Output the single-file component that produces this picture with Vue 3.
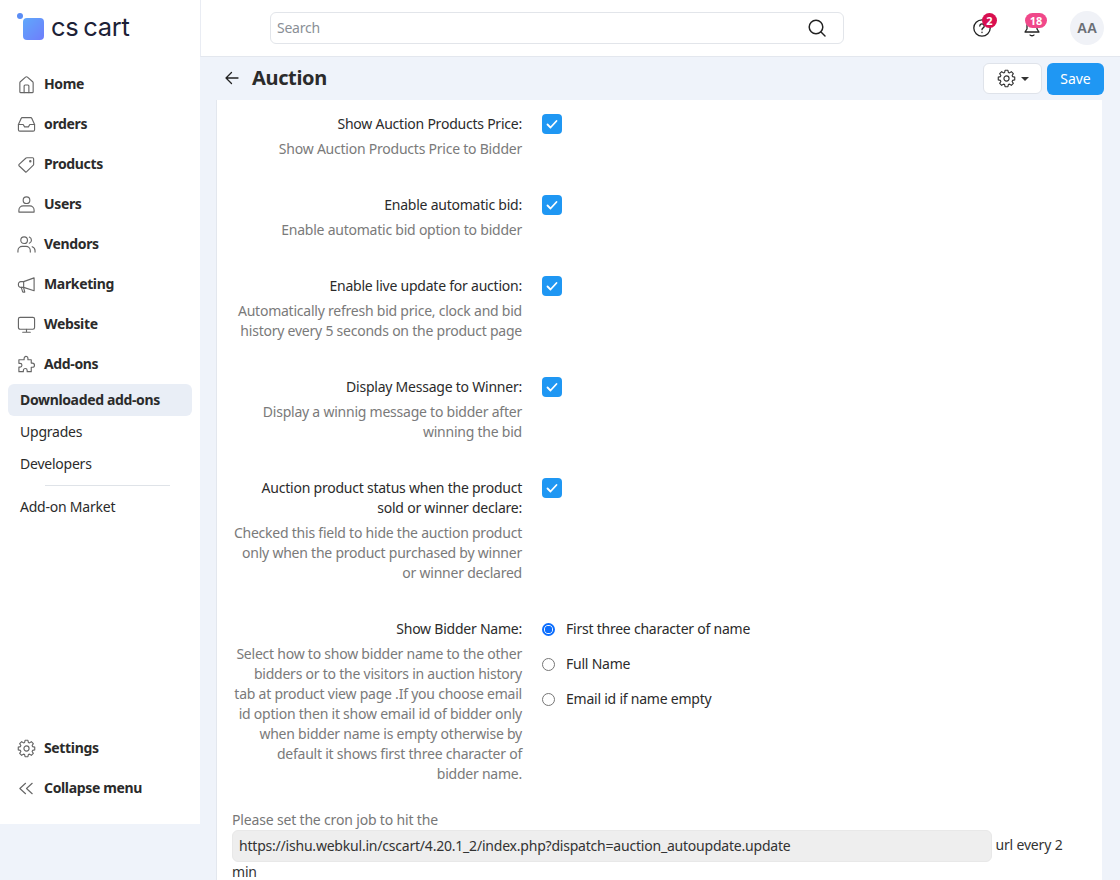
<template>
  <div class="app">
    <aside class="sidebar">
      <div class="logo">
        <span class="logo-mark"><i class="logo-dot"></i><i class="logo-box"></i></span>
        <span class="logo-text">cs cart</span>
      </div>

      <nav class="nav">
        <a v-for="item in menu" :key="item.label" class="nav-item">
          <svg class="nav-icon" viewBox="0 0 20 20" v-html="item.icon"></svg>
          {{ item.label }}
        </a>
      </nav>

      <div class="subnav">
        <a class="sub-item active">Downloaded add-ons</a>
        <a class="sub-item">Upgrades</a>
        <a class="sub-item">Developers</a>
        <div class="sub-divider"></div>
        <a class="sub-item">Add-on Market</a>
      </div>

      <div class="nav nav-bottom">
        <a v-for="item in bottomMenu" :key="item.label" class="nav-item">
          <svg class="nav-icon" viewBox="0 0 20 20" v-html="item.icon"></svg>
          {{ item.label }}
        </a>
      </div>
    </aside>

    <div class="main">
      <header class="topbar">
        <div class="search">
          <span class="search-text">Search</span>
          <svg class="search-icon" viewBox="0 0 20 20">
            <circle cx="9" cy="9" r="6.8" />
            <path d="M14 14l4 4" />
          </svg>
        </div>
        <div class="top-icons">
          <div class="top-icon help">
            <svg viewBox="0 0 20 20">
              <circle cx="10" cy="10" r="8.2" />
              <path d="M7.8 8a2.2 2.2 0 1 1 3.4 1.9c-.8.5-1.2 1-1.2 1.8" />
              <path d="M10 14.2v.4" />
            </svg>
            <span class="badge dark">2</span>
          </div>
          <div class="top-icon bell">
            <svg viewBox="0 0 20 20">
              <path d="M10 2.5c-3 0-5 2.2-5 5v3.5l-2 3h14l-2-3V7.500c0-2.800-2-5-5-5z" />
              <path d="M8 17c.6 1 3.400 1 4 0" />
            </svg>
            <span class="badge pink">18</span>
          </div>
          <div class="avatar">AA</div>
        </div>
      </header>

      <div class="page-head">
        <svg class="back" viewBox="0 0 16 16">
          <path d="M14 8H2M7.500 2.500L2 8l5.500 5.500" />
        </svg>
        <h1 class="title">Auction</h1>
        <div class="actions">
          <button class="btn-gear">
            <svg viewBox="0 0 20 20" v-html="gearIcon"></svg>
            <i class="caret"></i>
          </button>
          <button class="btn-save">Save</button>
        </div>
      </div>

      <section class="panel">
        <div class="rows">
          <div v-for="row in rows" :key="row.label" class="row">
            <div class="label-col">
              <div class="label">{{ row.label }}</div>
              <div class="hint">{{ row.hint }}</div>
            </div>
            <div class="control-col">
              <span v-if="row.checked" class="check">
                <svg viewBox="0 0 20 20"><path d="M5.500 10.500l3 3 6-6.500" /></svg>
              </span>
              <div v-else class="radios">
                <div v-for="(opt, i) in row.options" :key="opt" class="radio-row">
                  <span class="radio" :class="{ on: i === 0 }"></span>
                  {{ opt }}
                </div>
              </div>
            </div>
          </div>
        </div>

        <div class="cron">
          Please set the cron job to hit the
          <div class="cron-line">
            <span class="cron-url">https://ishu.webkul.in/cscart/4.20.1_2/index.php?dispatch=auction_autoupdate.update</span>
            url every 2 min
          </div>
        </div>
      </section>
    </div>
  </div>
</template>

<script setup>
// eight tooth cog, used in the sidebar and on the page head button
function cogPath() {
  const pts = []
  for (let i = 0; i < 8; i++) {
    const a = (i * Math.PI) / 4 - Math.PI / 2
    const spread = [
      [6.7, -0.3],
      [8.8, -0.17],
      [8.8, 0.17],
      [6.7, 0.3]
    ]
    for (const [r, d] of spread) {
      pts.push((10 + r * Math.cos(a + d)).toFixed(2) + ' ' + (10 + r * Math.sin(a + d)).toFixed(2))
    }
  }
  return 'M' + pts.join('L') + 'z'
}

const gearIcon = `<path d="${cogPath()}"/><circle cx="10" cy="10" r="2.700"/>`

const menu = [
  { label: 'Home', icon: '<path d="M3 17.500V8.200a1.500 1.500 0 0 1 .5-1.100L9 2.300a1.500 1.500 0 0 1 2 0l5.500 4.800a1.500 1.500 0 0 1 .5 1.100v9.300a1 1 0 0 1-1 1H4a1 1 0 0 1-1-1z"/><path d="M7.500 18.500v-7a1 1 0 0 1 1-1h3a1 1 0 0 1 1 1v7"/>' },
  { label: 'orders', icon: '<path d="M1.500 10l3-6.500a1 1 0 0 1 1-.7h9a1 1 0 0 1 1 .7l3 6.500v5.500a1.500 1.500 0 0 1-1.500 1.500H3a1.500 1.500 0 0 1-1.500-1.500z"/><path d="M1.500 10h5l1.500 2.500h4L13.500 10h5"/>' },
  { label: 'Products', icon: '<path d="M2.200 9.900L9.500 3.200a1 1 0 0 1 .7-.3h6.300a1 1 0 0 1 1 1v6a1 1 0 0 1-.3.7l-7 7a1 1 0 0 1-1.400 0l-6.700-6.300a1 1 0 0 1 .1-1.400z"/><circle cx="14" cy="6.500" r=".7"/>' },
  { label: 'Users', icon: '<circle cx="10" cy="5.500" r="3.500"/><path d="M2 18v-2c0-2.500 2-4.500 4.500-4.500h7c2.500 0 4.500 2 4.500 4.500v2z"/>' },
  { label: 'Vendors', icon: '<circle cx="7.500" cy="5.500" r="3.500"/><path d="M1 18v-1.500c0-2.500 2-4.500 4.500-4.500h4c2.500 0 4.500 2 4.500 4.500V18"/><path d="M13 2.200a3.500 3.500 0 0 1 0 6.500M16 12.300c1.800.7 3 2.200 3 4.200V18"/>' },
  { label: 'Marketing', icon: '<path d="M18 3v13.500L7 13H4a2.500 2.500 0 0 1-2.500-2.500v-1A2.500 2.500 0 0 1 4 7h3z"/><path d="M7 7v6M4.500 13l1.300 4.200a1 1 0 0 0 1 .8h1.400l-1.200-4.500"/>' },
  { label: 'Website', icon: '<rect x="1.500" y="2.500" width="17" height="12.500" rx="1.800"/><path d="M10 15v3M6 18.200h8"/>' },
  { label: 'Add-ons', icon: '<path d="M8 2.200a2 2 0 0 1 3.500 1.300V5h3.500v3.500h1.200a2.200 2.200 0 0 1 0 4.400H15v4.600h-4.300v-1.300a2 2 0 0 0-4 0v1.300H2v-4.700h1.200a2 2 0 0 0 0-4H2V5h5.500V3.500a2 2 0 0 1 .5-1.300z"/>' }
]

const bottomMenu = [
  { label: 'Settings', icon: gearIcon },
  { label: 'Collapse menu', icon: '<path d="M9 4.500l-6 5.500 6 5.500M16 4.500l-6 5.500 6 5.500"/>' }
]

const rows = [
  {
    label: 'Show Auction Products Price:',
    hint: 'Show Auction Products Price to Bidder',
    checked: true
  },
  {
    label: 'Enable automatic bid:',
    hint: 'Enable automatic bid option to bidder',
    checked: true
  },
  {
    label: 'Enable live update for auction:',
    hint: 'Automatically refresh bid price, clock and bid history every 5 seconds on the product page',
    checked: true
  },
  {
    label: 'Display Message to Winner:',
    hint: 'Display a winnig message to bidder after winning the bid',
    checked: true
  },
  {
    label: 'Auction product status when the product sold or winner declare:',
    hint: 'Checked this field to hide the auction product only when the product purchased by winner or winner declared',
    checked: true
  },
  {
    label: 'Show Bidder Name:',
    hint: 'Select how to show bidder name to the other bidders or to the visitors in auction history tab at product view page .If you choose email id option then it show email id of bidder only when bidder name is empty otherwise by default it shows first three character of bidder name.',
    options: ['First three character of name', 'Full Name', 'Email id if name empty']
  }
]
</script>

<style>
html,
body {
  margin: 0;
  background: #eff3fa;
}
</style>

<style scoped>
.app {
  display: flex;
  align-items: flex-start;
  width: 1120px;
  height: 880px;
  overflow: hidden;
  background: #eff3fa;
  font-family: "Noto Sans", "Open Sans", sans-serif;
  font-size: 14px;
  line-height: 20px;
  letter-spacing: -0.23px;
  color: #2b2b2b;
}

.sidebar {
  display: flex;
  flex-direction: column;
  box-sizing: border-box;
  flex: none;
  width: 200px;
  height: 824px;
  padding: 0 8px;
  background: #fff;
}

.logo {
  display: flex;
  align-items: center;
  height: 64px;
  gap: 7px;
  padding-left: 9px;
}

.logo-mark {
  position: relative;
  width: 27px;
  height: 28px;
  margin-top: -10px;
}

.logo-dot {
  position: absolute;
  left: 0;
  top: 0;
  width: 6px;
  height: 6px;
  border-radius: 50%;
  background: #5b8df5;
}

.logo-box {
  position: absolute;
  left: 6px;
  top: 5px;
  width: 21px;
  height: 22px;
  border-radius: 4px;
  background: linear-gradient(135deg, #5fa8fb, #6f7dfb);
}

.logo-text {
  font-family: Inter, sans-serif;
  font-size: 25.5px;
  letter-spacing: -0.3px;
  word-spacing: -2px;
  color: #1c2136;
  margin-top: -10px;
}

.nav-item {
  display: flex;
  align-items: center;
  gap: 8px;
  height: 40px;
  padding-left: 9px;
  font-weight: 700;
  letter-spacing: -0.35px;
  color: #2b2b2b;
}

.nav-icon {
  width: 19px;
  height: 19px;
  flex: none;
  fill: none;
  stroke: #666;
  stroke-width: 1.200;
  stroke-linejoin: round;
  stroke-linecap: round;
}

.subnav {
  display: flex;
  flex-direction: column;
}

.sub-item {
  display: flex;
  align-items: center;
  height: 32px;
  padding-left: 12px;
  border-radius: 6px;
}

.sub-item.active {
  background: #e9eef6;
  font-weight: 700;
  letter-spacing: -0.35px;
}

.sub-divider {
  height: 1px;
  margin: 5px 22px 5px 37px;
  background: #dfe3e8;
}

.nav-bottom {
  margin-top: auto;
  padding-bottom: 16px;
}

.main {
  flex: 1;
  min-width: 0;
}

.topbar {
  display: flex;
  align-items: center;
  box-sizing: border-box;
  height: 57px;
  padding: 0 16px 0 70px;
  background: #fff;
  border-bottom: 1px solid #e3e7ee;
  border-left: 1px solid #e9ecf3;
}

.search {
  display: flex;
  align-items: center;
  justify-content: space-between;
  box-sizing: border-box;
  width: 574px;
  height: 32px;
  padding: 0 16px 0 6px;
  border: 1px solid #e2e5ea;
  border-radius: 6px;
  margin-left: -1px;
}

.search-text {
  color: #8a8f96;
}

.search-icon {
  width: 20px;
  height: 20px;
  fill: none;
  stroke: #222;
  stroke-width: 1.500;
  stroke-linecap: round;
}

.top-icons {
  display: flex;
  align-items: center;
  margin-left: auto;
}

.top-icon {
  position: relative;
  width: 20px;
  height: 20px;
  margin-right: 30px;
}

.top-icon svg {
  display: block;
  width: 20px;
  height: 20px;
  fill: none;
  stroke: #222;
  stroke-width: 1.300;
  stroke-linecap: round;
  stroke-linejoin: round;
}

.badge {
  position: absolute;
  top: -5px;
  display: flex;
  align-items: center;
  justify-content: center;
  height: 15px;
  border-radius: 8px;
  color: #fff;
  font-size: 11px;
  font-weight: 700;
  line-height: 15px;
  letter-spacing: 0;
}

.badge.dark {
  left: 10px;
  width: 15px;
  background: #d80f50;
}

.badge.pink {
  left: 3px;
  width: 22px;
  background: #f0488a;
}

.avatar {
  display: flex;
  align-items: center;
  justify-content: center;
  width: 34px;
  height: 34px;
  margin-left: -2px;
  border-radius: 50%;
  background: #f0f2f7;
  color: #6b6f76;
  font-weight: 700;
  font-family: "Liberation Sans", sans-serif;
  letter-spacing: 0;
}

.page-head {
  display: flex;
  align-items: center;
  height: 43px;
  padding: 0 16px 2px 24px;
  box-sizing: border-box;
}

.back {
  width: 16px;
  height: 16px;
  fill: none;
  stroke: #222;
  stroke-width: 1.300;
  stroke-linecap: round;
  stroke-linejoin: round;
}

.title {
  margin: 0 0 0 12px;
  font-size: 20px;
  font-weight: 700;
  line-height: 28px;
  letter-spacing: -0.35px;
}

.actions {
  display: flex;
  align-items: center;
  gap: 5px;
  margin-left: auto;
  margin-top: 2px;
}

.btn-gear {
  display: flex;
  align-items: center;
  justify-content: center;
  gap: 5px;
  width: 59px;
  height: 31px;
  padding: 0;
  background: #fff;
  border: 1px solid #dfe3ea;
  border-radius: 6px;
}

.btn-gear svg {
  width: 19px;
  height: 19px;
  fill: none;
  stroke: #333;
  stroke-width: 1.200;
  stroke-linejoin: round;
}

.caret {
  width: 0;
  height: 0;
  border-left: 4px solid transparent;
  border-right: 4px solid transparent;
  border-top: 4px solid #333;
}

.btn-save {
  width: 57px;
  height: 32px;
  padding: 0;
  background: #1f97f3;
  border: none;
  border-radius: 6px;
  color: #fff;
  font-family: inherit;
  font-size: 14px;
}

.panel {
  box-sizing: border-box;
  width: 886px;
  margin-left: 16px;
  padding: 14px 15px 20px;
  background: #fff;
  border-left: 1px solid #e3e7ee;
}

.rows {
  display: flex;
  flex-direction: column;
  gap: 36px;
  margin-bottom: 26px;
}

.row {
  display: flex;
  gap: 20px;
}

.label-col {
  flex: none;
  width: 290px;
  text-align: right;
}

.label {
  color: #2b2b2b;
}

.hint {
  margin-top: 5px;
  color: #7a7a7a;
}

.check {
  display: flex;
  align-items: center;
  justify-content: center;
  width: 20px;
  height: 20px;
  border-radius: 4px;
  background: #1f97f3;
}

.check svg {
  width: 20px;
  height: 20px;
  fill: none;
  stroke: #fff;
  stroke-width: 1.800;
  stroke-linecap: round;
  stroke-linejoin: round;
}

.radios {
  display: flex;
  flex-direction: column;
  gap: 15px;
}

.radio-row {
  display: flex;
  align-items: center;
  gap: 11px;
  height: 20px;
}

.radio {
  box-sizing: border-box;
  width: 13px;
  height: 13px;
  border: 1px solid #767676;
  border-radius: 50%;
}

.radio.on {
  border: 2px solid #0d6efd;
  background: radial-gradient(circle, #0d6efd 0 3.500px, #fff 4px);
}

.cron {
  color: #777;
  letter-spacing: -0.17px;
}

.cron-line {
  width: 840px;
  color: #333;
}

.cron-url {
  display: inline-block;
  box-sizing: border-box;
  width: 760px;
  height: 32px;
  padding: 0 6px;
  line-height: 30px;
  background: #eee;
  border: 1px solid #e8e8e8;
  border-radius: 6px;
  color: #333;
  letter-spacing: -0.21px;
  vertical-align: middle;
}
</style>
